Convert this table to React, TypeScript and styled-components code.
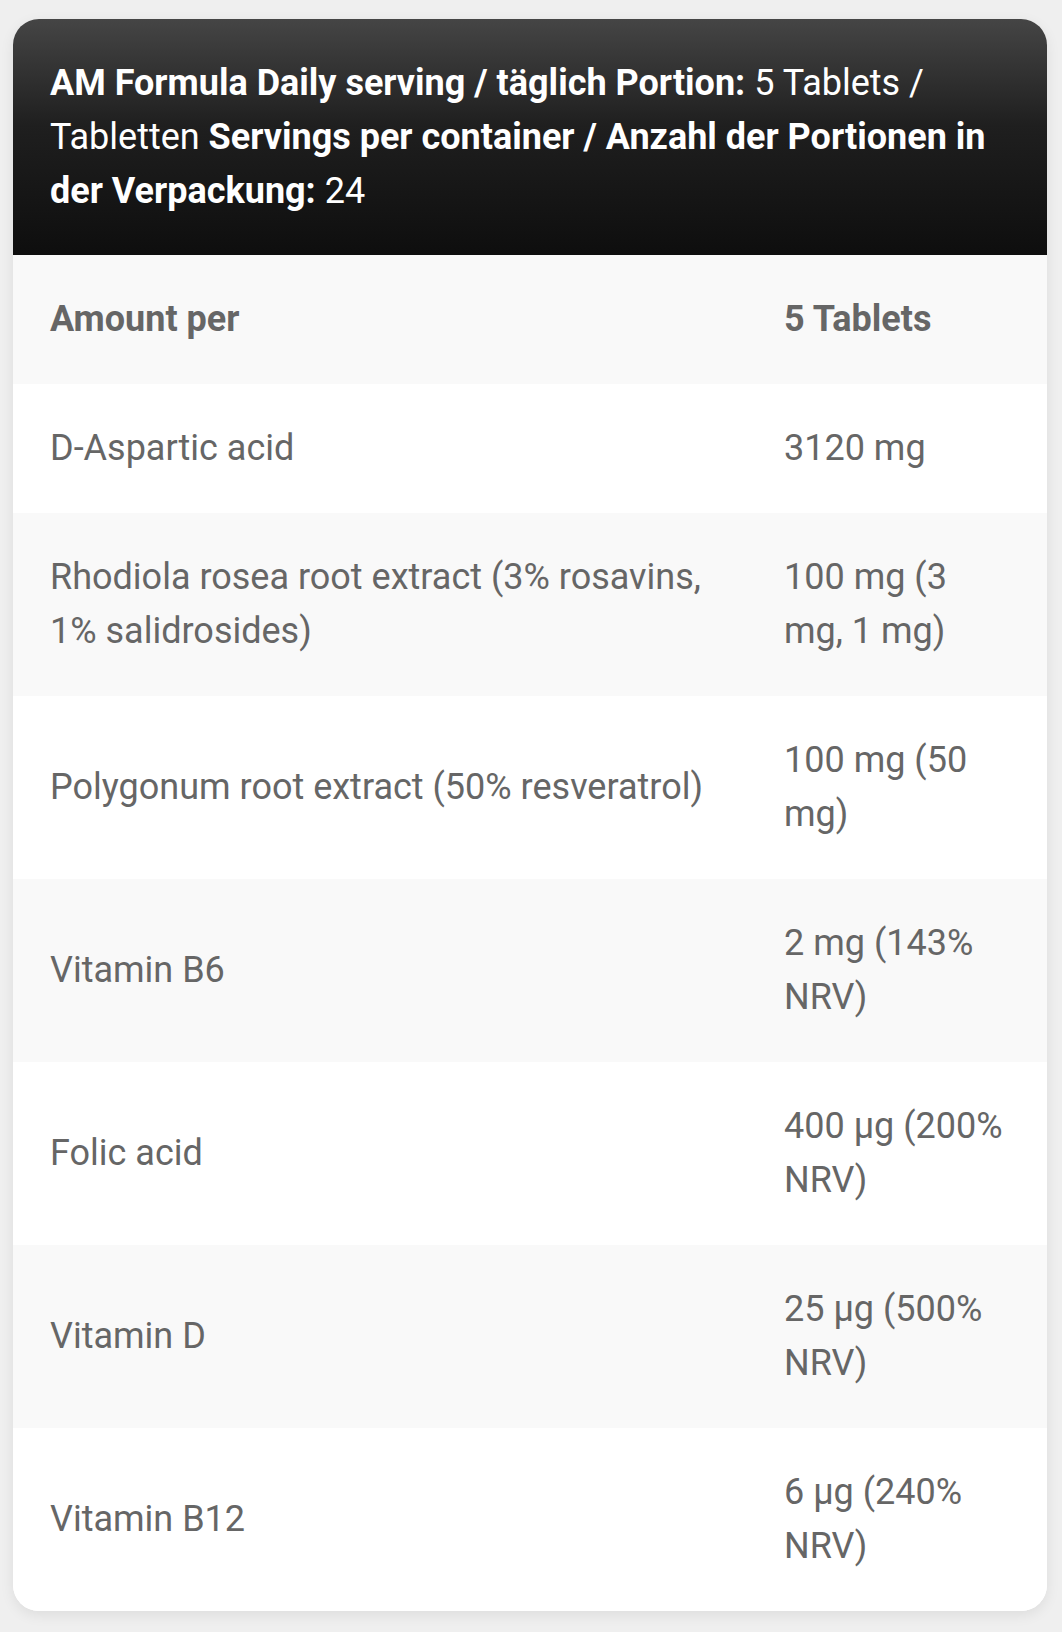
import React from 'react'
import styled, { createGlobalStyle } from 'styled-components'

const GlobalStyle = createGlobalStyle`
  html, body {
    margin: 0;
    padding: 0;
    background: #efefef;
    font-family: Roboto, "Noto Sans", "Liberation Sans", sans-serif;
  }
`

const Page = styled.div`
  padding: 19px 15px 22px 13px;
`

const Card = styled.div`
  background: #fff;
  border-radius: 26px;
  overflow: hidden;
  box-shadow: 0 4px 14px rgba(0, 0, 0, 0.08);
`

const Header = styled.div`
  background: linear-gradient(180deg, #454545 0%, #1f1f1f 45%, #0e0e0e 100%);
  color: #fff;
  padding: 37px 37px;
  font-size: 36px;
  line-height: 54px;
  font-weight: 400;
`

const Strong = styled.b`
  font-weight: 700;
`

const Table = styled.table`
  width: 100%;
  border-collapse: collapse;
  table-layout: fixed;
`

const Row = styled.tr<{ $shade: boolean }>`
  background: ${p => (p.$shade ? '#f9f9f9' : '#ffffff')};
`

const Cell = styled.td<{ $head?: boolean }>`
  padding: 37px 37px 38px;
  font-size: 36px;
  line-height: 54px;
  color: #666;
  font-weight: ${p => (p.$head ? 700 : 400)};
  vertical-align: middle;
  word-wrap: break-word;
`

const NameCol = styled.col`
  width: 734px;
`

const rows: [string, string][] = [
  ['D-Aspartic acid', '3120 mg'],
  ['Rhodiola rosea root extract (3% rosavins, 1% salidrosides)', '100 mg (3 mg, 1 mg)'],
  ['Polygonum root extract (50% resveratrol)', '100 mg (50 mg)'],
  ['Vitamin B6', '2 mg (143% NRV)'],
  ['Folic acid', '400 µg (200% NRV)'],
  ['Vitamin D', '25 µg (500% NRV)'],
  ['Vitamin B12', '6 µg (240% NRV)'],
]

const App: React.FC = () => {
  return (
    <Page>
      <GlobalStyle />
      <Card>
        <Header>
          <Strong>AM Formula Daily serving / täglich Portion:</Strong> 5 Tablets / Tabletten{' '}
          <Strong>Servings per container / Anzahl der Portionen in der Verpackung:</Strong> 24
        </Header>
        <Table>
          <colgroup>
            <NameCol />
            <col />
          </colgroup>
          <tbody>
            <Row $shade>
              <Cell $head>Amount per</Cell>
              <Cell $head>5 Tablets</Cell>
            </Row>
            {rows.map(([name, value], i) => (
              <Row key={name} $shade={i % 2 === 1}>
                <Cell>{name}</Cell>
                <Cell>{value}</Cell>
              </Row>
            ))}
          </tbody>
        </Table>
      </Card>
    </Page>
  )
}

export default App
